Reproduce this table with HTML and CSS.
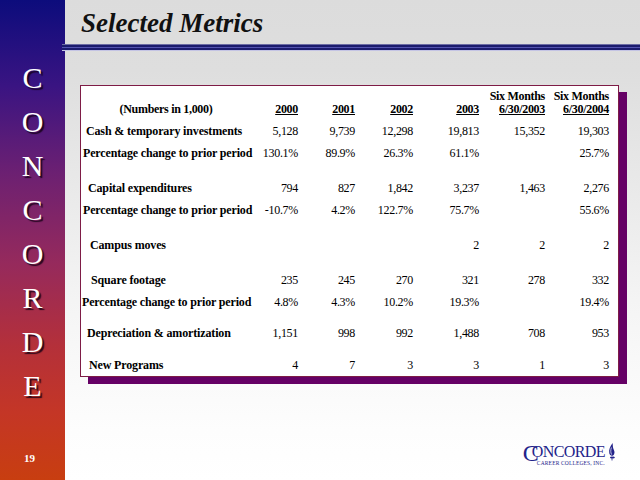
FILE: index.html
```html
<!DOCTYPE html>
<html lang="en">
<head>
<meta charset="utf-8">
<title>Selected Metrics</title>
<link rel="stylesheet" href="styles.css">
</head>
<body>
<div class="page">
  <aside class="sidebar">
    <div class="brand">
      <span>C</span><span>O</span><span>N</span><span>C</span><span>O</span><span>R</span><span>D</span><span>E</span>
    </div>
    <div class="pagenum">19</div>
  </aside>
  <main class="main">
    <header class="titlebar"><h1>Selected Metrics</h1></header>
    <div class="rule"></div>
    <section class="card">
      <table class="metrics">
        <colgroup>
          <col class="c-lbl"><col class="c-00"><col class="c-01"><col class="c-02"><col class="c-03"><col class="c-s3"><col class="c-s4">
        </colgroup>
        <thead>
          <tr>
            <th class="lbl-head">(Numbers in 1,000)</th>
            <th><u>2000</u></th>
            <th><u>2001</u></th>
            <th><u>2002</u></th>
            <th><u>2003</u></th>
            <th>Six Months<br><u>6/30/2003</u></th>
            <th>Six Months<br><u>6/30/2004</u></th>
          </tr>
        </thead>
        <tbody>
          <tr>
            <td class="lbl in5">Cash &amp; temporary investments</td>
            <td>5,128</td><td>9,739</td><td>12,298</td><td>19,813</td><td>15,352</td><td>19,303</td>
          </tr>
          <tr>
            <td class="lbl in2">Percentage change to prior period</td>
            <td>130.1%</td><td>89.9%</td><td>26.3%</td><td>61.1%</td><td></td><td>25.7%</td>
          </tr>
          <tr class="gap13">
            <td class="lbl in7">Capital expenditures</td>
            <td>794</td><td>827</td><td>1,842</td><td>3,237</td><td>1,463</td><td>2,276</td>
          </tr>
          <tr>
            <td class="lbl in2">Percentage change to prior period</td>
            <td>-10.7%</td><td>4.2%</td><td>122.7%</td><td>75.7%</td><td></td><td>55.6%</td>
          </tr>
          <tr class="gap13">
            <td class="lbl in9">Campus moves</td>
            <td></td><td></td><td></td><td>2</td><td>2</td><td>2</td>
          </tr>
          <tr class="gap13">
            <td class="lbl in10">Square footage</td>
            <td>235</td><td>245</td><td>270</td><td>321</td><td>278</td><td>332</td>
          </tr>
          <tr>
            <td class="lbl in1">Percentage change to prior period</td>
            <td>4.8%</td><td>4.3%</td><td>10.2%</td><td>19.3%</td><td></td><td>19.4%</td>
          </tr>
          <tr class="gap9">
            <td class="lbl in6">Depreciation &amp; amortization</td>
            <td>1,151</td><td>998</td><td>992</td><td>1,488</td><td>708</td><td>953</td>
          </tr>
          <tr class="gap10">
            <td class="lbl in8">New Programs</td>
            <td>4</td><td>7</td><td>3</td><td>3</td><td>1</td><td>3</td>
          </tr>
        </tbody>
      </table>
    </section>
    <footer class="logo-row">
      <div class="logo">
        <span class="logo-c">C</span>
        <div class="logo-words">
          <span class="logo-name">ONCORDE</span>
          <span class="logo-sub">CAREER COLLEGES, INC.</span>
        </div>
        <svg class="logo-flame" viewBox="0 0 8 18" width="8" height="18" aria-hidden="true">
          <path d="M4.6 0 C2.2 3.5 0.6 6.5 1.3 10.2 C1.8 12.8 4.6 13.6 6 11.4 C7.2 9.4 6 7.4 5.3 5.6 C4.7 4 4.9 1.8 4.6 0 Z" fill="#23238a"/>
          <path d="M3.4 4.5 C2.5 7.2 2.6 9.6 3.6 11.6" stroke="#fff" stroke-width="0.7" fill="none"/>
          <path d="M2.6 14 H6.2 V15 H2.6 Z M4 15 V17.5" stroke="#23238a" stroke-width="0.8" fill="#23238a"/>
        </svg>
      </div>
    </footer>
  </main>
</div>
</body>
</html>
```

FILE: styles.css
```css
* { box-sizing: border-box; }

html, body {
  margin: 0;
  padding: 0;
  width: 640px;
  height: 480px;
  overflow: hidden;
}

body {
  font-family: "Liberation Serif", "Times New Roman", serif;
  color: #000;
}

.page {
  display: flex;
  width: 640px;
  height: 480px;
}

.sidebar {
  width: 65px;
  flex: none;
  display: flex;
  flex-direction: column;
  align-items: center;
  background: linear-gradient(to bottom,
    #0c0c7c 0%,
    #3a1482 18%,
    #6c2072 36%,
    #962a5c 55%,
    #b4303a 72%,
    #c43626 86%,
    #c83e10 100%);
}

.brand {
  display: flex;
  flex-direction: column;
  align-items: center;
  padding-top: 56px;
}

.brand span {
  display: block;
  font-size: 30px;
  line-height: 44px;
  color: #fff;
  text-shadow: 2px 2px 1px rgba(20, 0, 20, 0.85);
}

.pagenum {
  margin-top: auto;
  margin-bottom: 15px;
  margin-right: 6px;
  font-size: 11px;
  line-height: 14px;
  font-weight: bold;
  color: #fff;
}

.main {
  flex: 1;
  display: flex;
  flex-direction: column;
  background: linear-gradient(to bottom, #dcdcdc 0px, #dedede 70px, #f4f4f4 300px, #fdfdfd 430px, #fff 480px);
}

.titlebar {
  height: 44px;
  padding: 2px 0 0 16px;
}

.titlebar h1 {
  margin: 0;
  font-size: 27px;
  line-height: 42px;
  font-weight: bold;
  font-style: italic;
  color: #111;
}

.rule {
  height: 7px;
  margin-left: -3px;
  position: relative;
  background: linear-gradient(to bottom,
    #6c6ca4 0px, #6c6ca4 1px,
    #1c1c6e 1px, #1c1c6e 3px,
    #5454b0 3px, #5454b0 4px,
    #1c1c6e 4px, #1c1c6e 6px,
    #c4c4e4 6px, #c4c4e4 7px);
}

.card {
  align-self: flex-start;
  margin: 34px 0 0 15px;
  padding: 0 9px 0 0;
  background: #fff;
  border: 1px solid #7e1c46;
  box-shadow: 8px 7px 0 #650065;
}

.metrics {
  border-collapse: collapse;
  table-layout: fixed;
  width: 528px;
  font-size: 12px;
}

.c-lbl { width: 170px; }
.c-00 { width: 47px; }
.c-01 { width: 57px; }
.c-02 { width: 58px; }
.c-03 { width: 66px; }
.c-s3 { width: 66px; }
.c-s4 { width: 64px; }

.metrics th {
  padding: 4px 0 4px 0;
  line-height: 13px;
  font-weight: bold;
  text-align: right;
  vertical-align: bottom;
  white-space: nowrap;
  letter-spacing: -0.3px;
}

.metrics th.lbl-head {
  text-align: center;
}

.metrics td {
  padding: 0;
  line-height: 22px;
  text-align: right;
  vertical-align: bottom;
  white-space: nowrap;
  letter-spacing: -0.3px;
}

.metrics td.lbl {
  text-align: left;
  font-weight: bold;
  overflow: visible;
  letter-spacing: -0.15px;
}

.metrics tr.gap13 td { padding-top: 13px; }
.metrics tr.gap9 td { padding-top: 9px; }
.metrics tr.gap10 td { padding-top: 10px; }

.in1 { padding-left: 1px !important; }
.in2 { padding-left: 2px !important; }
.in5 { padding-left: 5px !important; }
.in6 { padding-left: 6px !important; }
.in7 { padding-left: 7px !important; }
.in8 { padding-left: 8px !important; }
.in9 { padding-left: 9px !important; }
.in10 { padding-left: 10px !important; }

.logo-row {
  display: flex;
  justify-content: flex-end;
  padding-right: 24px;
  margin-top: 64px;
}

.logo {
  display: flex;
  align-items: flex-start;
  color: #23238a;
}

.logo-c {
  font-size: 24px;
  line-height: 24px;
  letter-spacing: -7px;
}

.logo-words {
  display: flex;
  flex-direction: column;
  padding-top: 3px;
}

.logo-name {
  font-size: 16px;
  line-height: 16px;
  letter-spacing: -0.6px;
}

.logo-sub {
  font-size: 5.5px;
  line-height: 7px;
  margin-left: 5px;
  letter-spacing: 0.15px;
  white-space: nowrap;
}

.logo-flame {
  margin-left: 3px;
  margin-top: 2px;
}
```
